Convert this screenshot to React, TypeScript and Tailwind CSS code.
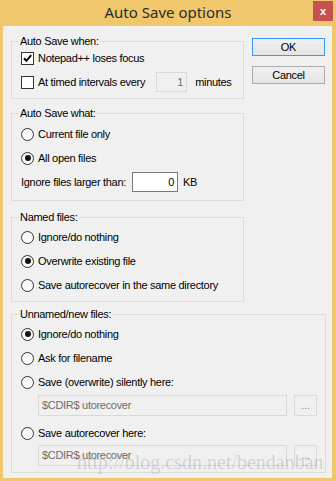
import React from "react";

const ui = "font-['Liberation_Sans',Arial,sans-serif] text-[11px] leading-[13px] tracking-[-0.3px] text-black";

const CheckBox: React.FC<{ checked?: boolean }> = ({ checked }) => (
  <span className="flex h-[13px] w-[13px] shrink-0 items-center justify-center border border-[#333333] bg-white">
    {checked && (
      <svg viewBox="0 0 11 11" className="h-[11px] w-[11px]">
        <path d="M2 5.2 L4.4 7.8 L9.2 2.2" stroke="#000" strokeWidth="2" fill="none" />
      </svg>
    )}
  </span>
);

const Radio: React.FC<{ checked?: boolean }> = ({ checked }) => (
  <span className="flex h-[13px] w-[13px] shrink-0 items-center justify-center rounded-full border border-[#333333] bg-gradient-to-b from-[#f4f4f4] to-white">
    {checked && <span className="h-[6px] w-[6px] rounded-full bg-[#111111]" />}
  </span>
);

const Option: React.FC<{ radio?: boolean; checked?: boolean; label: string; className?: string }> = ({
  radio,
  checked,
  label,
  className = "",
}) => (
  <div className={"flex h-[20px] items-center gap-[4px] " + className}>
    {radio ? <Radio checked={checked} /> : <CheckBox checked={checked} />}
    <span>{label}</span>
  </div>
);

const Group: React.FC<{ title: string; className?: string; children: React.ReactNode }> = ({
  title,
  className = "",
  children,
}) => (
  <fieldset className={"border border-[#dcdcdc] " + className}>
    <legend className="ml-[7px] px-[1px] leading-[13px]">{title}</legend>
    {children}
  </fieldset>
);

const PathRow: React.FC<{ className?: string }> = ({ className = "" }) => (
  <div className={"ml-[17px] flex h-[21px] items-stretch gap-[7px] " + className}>
    <div className="flex w-[249px] items-center border border-[#d9d9d9] bg-[#f0f0f0] pl-[3px] text-[#6d6d6d]">
      $CDIR$ utorecover
    </div>
    <div className="flex w-[23px] items-end justify-center border border-[#d9d9d9] bg-[#f0f0f0] pb-[3px] text-[#8a8a8a]">
      ...
    </div>
  </div>
);

const Button: React.FC<{ label: string; primary?: boolean }> = ({ label, primary }) => (
  <div
    className={
      "flex h-[18px] w-[73px] items-center justify-center border bg-gradient-to-b from-[#f0f0f0] to-[#e5e5e5] " +
      (primary ? "border-[#3399ff]" : "border-[#acacac]")
    }
  >
    {label}
  </div>
);

export default function App() {
  return (
    <div className={"flex h-[481px] w-[336px] flex-col bg-[#f0c86b] " + ui}>
      {/* title bar */}
      <div className="grid h-[26px] grid-cols-[1fr_auto_1fr]">
        <div />
        <div className="pt-[2px] font-['Noto_Sans',sans-serif] text-[15px] leading-[20px] tracking-normal text-[#2b2b2b]">
          Auto Save options
        </div>
        <div className="flex justify-end pr-[3px] pt-[1px]">
          <div className="flex h-[20px] w-[20px] items-center justify-center bg-[#c75050] text-[11px] font-bold text-white">
            x
          </div>
        </div>
      </div>

      {/* client area */}
      <div className="relative mb-[3px] ml-[3px] mr-[4px] flex-1 bg-[#f0f0f0] pl-[8px] pt-[9px]">
        <div className="flex">
          <div className="flex w-[233px] flex-col">
            <Group title="Auto Save when:">
              <div className="flex flex-col gap-[4px] pb-[6px] pl-[9px]">
                <Option checked label="Notepad++ loses focus" />
                <div className="flex h-[20px] items-center">
                  <CheckBox />
                  <span className="ml-[4px]">At timed intervals every</span>
                  <div className="ml-[11px] flex h-[20px] w-[31px] items-center justify-end border border-[#d9d9d9] bg-[#f0f0f0] pr-[3px] text-[#6d6d6d]">
                    1
                  </div>
                  <span className="ml-[8px]">minutes</span>
                </div>
              </div>
            </Group>

            <Group title="Auto Save what:" className="mt-[8px]">
              <div className="flex flex-col gap-[4px] pb-[8px] pl-[9px] pt-[4px]">
                <Option radio label="Current file only" />
                <Option radio checked label="All open files" />
                <div className="flex h-[20px] items-center">
                  <span>Ignore files larger than:</span>
                  <div className="ml-[6px] flex h-[20px] w-[46px] items-center justify-end border border-[#7a7a7a] bg-white pr-[3px]">
                    0
                  </div>
                  <span className="ml-[5px]">KB</span>
                </div>
              </div>
            </Group>

            <Group title="Named files:" className="mt-[10px]">
              <div className="flex flex-col gap-[4px] pb-[6px] pl-[9px] pt-[3px]">
                <Option radio label="Ignore/do nothing" />
                <Option radio checked label="Overwrite existing file" />
                <Option radio label="Save autorecover in the same directory" />
              </div>
            </Group>
          </div>

          <div className="ml-[8px] mt-[3px] flex flex-col gap-[10px]">
            <Button primary label="OK" />
            <Button label="Cancel" />
          </div>
        </div>

        <Group title="Unnamed/new files:" className="mt-[6px] w-[315px]">
          <div className="flex flex-col pb-[6px] pl-[9px] pt-[3px]">
            <Option radio checked label="Ignore/do nothing" />
            <Option radio label="Ask for filename" className="mt-[4px]" />
            <Option radio label="Save (overwrite) silently here:" className="mt-[4px]" />
            <PathRow className="mt-[3px]" />
            <Option radio label="Save autorecover here:" className="mt-[7px]" />
            <PathRow className="mt-[2px]" />
          </div>
        </Group>

        <div className="pointer-events-none absolute left-[74px] top-[426px] font-['Liberation_Serif',serif] text-[20px] leading-[20px] tracking-normal text-black/15">
          http://blog.csdn.net/bendanban
        </div>
      </div>
    </div>
  );
}
